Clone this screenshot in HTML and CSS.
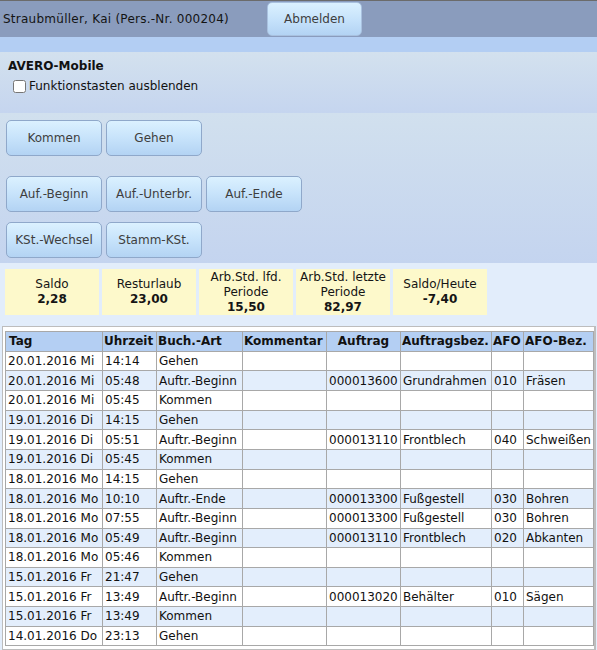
FILE: index.html
```html
<!DOCTYPE html>
<html lang="de">
<head>
<meta charset="utf-8">
<title>AVERO-Mobile</title>
<link rel="stylesheet" href="styles.css">
</head>
<body>
<div class="topbar">
  <span class="user">Straubmüller, Kai (Pers.-Nr. 000204)</span>
  <button class="btn btn-logout" type="button">Abmelden</button>
</div>
<div class="band"></div>
<div class="app-head">
  <div class="app-title">AVERO-Mobile</div>
  <label class="toggle"><input type="checkbox" class="toggle-box">Funktionstasten ausblenden</label>
</div>
<div class="keys">
  <div class="key-row">
    <button class="btn key" type="button">Kommen</button>
    <button class="btn key" type="button">Gehen</button>
  </div>
  <div class="key-row key-row-2">
    <button class="btn key" type="button">Auf.-Beginn</button>
    <button class="btn key" type="button">Auf.-Unterbr.</button>
    <button class="btn key" type="button">Auf.-Ende</button>
  </div>
  <div class="key-row key-row-3">
    <button class="btn key" type="button">KSt.-Wechsel</button>
    <button class="btn key" type="button">Stamm-KSt.</button>
  </div>
</div>
<div class="content">
  <div class="stats">
    <div class="stat"><span>Saldo</span><b>2,28</b></div>
    <div class="stat"><span>Resturlaub</span><b>23,00</b></div>
    <div class="stat"><span>Arb.Std. lfd.<br>Periode</span><b>15,50</b></div>
    <div class="stat"><span>Arb.Std. letzte<br>Periode</span><b>82,97</b></div>
    <div class="stat"><span>Saldo/Heute</span><b>-7,40</b></div>
  </div>
  <div class="frame">
    <table class="log">
      <colgroup>
        <col class="c-tag"><col class="c-zeit"><col class="c-art"><col class="c-komm"><col class="c-auf"><col class="c-aufbez"><col class="c-afo"><col class="c-afobez">
      </colgroup>
      <thead>
        <tr><th>Tag</th><th>Uhrzeit</th><th>Buch.-Art</th><th>Kommentar</th><th class="center">Auftrag</th><th>Auftragsbez.</th><th>AFO</th><th>AFO-Bez.</th></tr>
      </thead>
      <tbody>
        <tr><td>20.01.2016 Mi</td><td>14:14</td><td>Gehen</td><td></td><td></td><td></td><td></td><td></td></tr>
        <tr><td>20.01.2016 Mi</td><td>05:48</td><td>Auftr.-Beginn</td><td></td><td>000013600</td><td>Grundrahmen</td><td>010</td><td>Fräsen</td></tr>
        <tr><td>20.01.2016 Mi</td><td>05:45</td><td>Kommen</td><td></td><td></td><td></td><td></td><td></td></tr>
        <tr><td>19.01.2016 Di</td><td>14:15</td><td>Gehen</td><td></td><td></td><td></td><td></td><td></td></tr>
        <tr><td>19.01.2016 Di</td><td>05:51</td><td>Auftr.-Beginn</td><td></td><td>000013110</td><td>Frontblech</td><td>040</td><td>Schweißen</td></tr>
        <tr><td>19.01.2016 Di</td><td>05:45</td><td>Kommen</td><td></td><td></td><td></td><td></td><td></td></tr>
        <tr><td>18.01.2016 Mo</td><td>14:15</td><td>Gehen</td><td></td><td></td><td></td><td></td><td></td></tr>
        <tr><td>18.01.2016 Mo</td><td>10:10</td><td>Auftr.-Ende</td><td></td><td>000013300</td><td>Fußgestell</td><td>030</td><td>Bohren</td></tr>
        <tr><td>18.01.2016 Mo</td><td>07:55</td><td>Auftr.-Beginn</td><td></td><td>000013300</td><td>Fußgestell</td><td>030</td><td>Bohren</td></tr>
        <tr><td>18.01.2016 Mo</td><td>05:49</td><td>Auftr.-Beginn</td><td></td><td>000013110</td><td>Frontblech</td><td>020</td><td>Abkanten</td></tr>
        <tr><td>18.01.2016 Mo</td><td>05:46</td><td>Kommen</td><td></td><td></td><td></td><td></td><td></td></tr>
        <tr><td>15.01.2016 Fr</td><td>21:47</td><td>Gehen</td><td></td><td></td><td></td><td></td><td></td></tr>
        <tr><td>15.01.2016 Fr</td><td>13:49</td><td>Auftr.-Beginn</td><td></td><td>000013020</td><td>Behälter</td><td>010</td><td>Sägen</td></tr>
        <tr><td>15.01.2016 Fr</td><td>13:49</td><td>Kommen</td><td></td><td></td><td></td><td></td><td></td></tr>
        <tr><td>14.01.2016 Do</td><td>23:13</td><td>Gehen</td><td></td><td></td><td></td><td></td><td></td></tr>
      </tbody>
    </table>
  </div>
</div>
</body>
</html>
```

FILE: styles.css
```css
* { box-sizing: border-box; }

html, body {
  margin: 0;
  padding: 0;
}

body {
  font-family: "DejaVu Sans", Verdana, sans-serif;
  font-size: 12px;
  color: #111;
  background: #e2edfb;
  width: 597px;
  height: 650px;
  overflow: hidden;
}

/* top bar */
.topbar {
  display: flex;
  align-items: flex-start;
  height: 37px;
  border-top: 1px solid #6b6b6b;
  background: #8a9cbd;
  padding-left: 3px;
}

.user {
  width: 264px;
  line-height: 36px;
  color: #141414;
  white-space: nowrap;
  letter-spacing: 0.25px;
}

.btn {
  font-family: "DejaVu Sans", Verdana, sans-serif;
  font-size: 12px;
  color: #3e3e3e;
  background: linear-gradient(to bottom, #dbf1ff 0%, #c7e3fb 50%, #b3d3f3 100%);
  border: 1px solid #8fa8ca;
  border-radius: 5px;
  padding: 0;
  margin: 0;
  white-space: nowrap;
}

.btn-logout {
  width: 95px;
  height: 34px;
  margin-top: 1px;
  border-color: #a9c1df;
}

.band {
  height: 15px;
  background: #b3cef3;
}

/* app head */
.app-head {
  height: 61px;
  padding: 7px 8px 0;
  background: linear-gradient(to bottom, #d3e1ee, #c5d5ef);
}

.app-title {
  font-weight: bold;
  line-height: 15px;
}

.toggle {
  display: flex;
  align-items: center;
  height: 16px;
  margin-top: 4px;
  line-height: 16px;
}

.toggle-box {
  width: 13px;
  height: 13px;
  margin: 0 3px 0 5px;
}

/* function keys */
.keys {
  height: 150px;
  padding: 7px 0 0 6px;
  background: linear-gradient(to bottom, #d1e0ee, #c4d4ef);
}

.key-row {
  display: flex;
  gap: 4px;
}

.key-row-2 { margin-top: 20px; }
.key-row-3 { margin-top: 10px; }

.key {
  width: 96px;
  height: 36px;
}

/* stats */
.content {
  padding-top: 6px;
}

.stats {
  display: flex;
  gap: 3px;
  padding-left: 5px;
  height: 46px;
}

.stat {
  width: 94px;
  background: #fdf9cb;
  display: flex;
  flex-direction: column;
  justify-content: center;
  align-items: center;
  text-align: center;
  line-height: 15px;
  color: #151515;
}

.stat b { font-weight: bold; }

/* table frame */
.frame {
  margin: 11px 1px 0 2px;
  border: 1px solid #bdbdbd;
  border-right-width: 2px;
  background: #fff;
  padding: 4px 2px 3px 2px;
}

.log {
  width: 588px;
  table-layout: fixed;
  border-collapse: collapse;
}

.c-tag { width: 97px; }
.c-zeit { width: 54px; }
.c-art { width: 86px; }
.c-komm { width: 84px; }
.c-auf { width: 74px; }
.c-aufbez { width: 91px; }
.c-afo { width: 32px; }
.c-afobez { width: 70px; }

.log th,
.log td {
  border: 1px solid #a8a8a8;
  padding: 0 2px;
  white-space: nowrap;
  overflow: hidden;
  text-align: left;
  vertical-align: middle;
  line-height: 14px;
}

.log thead tr { height: 19.6px; }
.log tbody tr { height: 19.67px; }

.log th {
  background: #b4cff3;
  font-weight: bold;
  color: #111;
  padding: 0 1px;
}

.log th:first-child { padding-left: 3px; }

.log th.center { text-align: center; }

.log td { color: #111; }

.log tbody tr:nth-child(even) td { background: #e3eefc; }
.log tbody tr:nth-child(odd) td { background: #fff; }
```
